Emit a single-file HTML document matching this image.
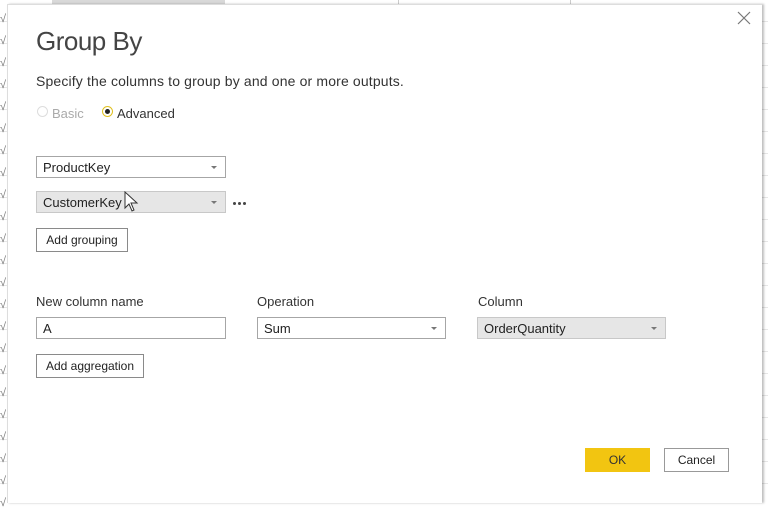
<!DOCTYPE html>
<html><head><style>
body{margin:0;width:768px;height:502px;overflow:hidden;background:#fff;font-family:"Liberation Sans",sans-serif;position:relative;color:#333}
.bg{position:absolute;left:0;top:0;width:768px;height:502px;background:
repeating-linear-gradient(to bottom,#fff 0 21px,#e6e6e6 21px 22px)}
.dlg{position:absolute;left:7px;top:4px;width:754px;height:498px;background:#fff;border-left:1px solid #ddd;border-top:1px solid #ddd;box-shadow:2px 0 2px rgba(0,0,0,.25)}
.a{position:absolute;white-space:nowrap}
.sel{position:absolute;height:22px;border:1px solid #a6a6a6;box-sizing:border-box;font-size:13px;line-height:21px;padding-left:6px;color:#222;background:#fff}
.sel.g{background:#e6e6e6;border-color:#c8c8c8}
.sel .ar{position:absolute;right:8px;top:9px;width:0;height:0;border-left:3px solid transparent;border-right:3px solid transparent;border-top:3px solid #777}
.btn{position:absolute;height:24px;border:1px solid #8a8a8a;box-sizing:border-box;font-size:12px;line-height:23px;text-align:center;color:#222;background:#fff}
</style></head><body>
<div class="bg"></div>
<div class="a" style="left:52px;top:0;width:173px;height:4px;background:#d9d9d9"></div>
<div class="a" style="left:398px;top:0;width:1px;height:4px;background:#ccc"></div>
<div class="a" style="left:570px;top:0;width:1px;height:4px;background:#ccc"></div>
<div class="a" style="left:0;top:8px;font-size:11px;color:#777;line-height:22px">√<br>√<br>√<br>√<br>√<br>√<br>√<br>√<br>√<br>√<br>√<br>√<br>√<br>√<br>√<br>√<br>√<br>√<br>√<br>√<br>√<br>√<br>√</div>
<div class="dlg"></div>
<svg class="a" style="left:737px;top:11px" width="14" height="14"><path d="M1 1L13 13M13 1L1 13" stroke="#777" stroke-width="1.2"/></svg>
<div class="a" style="left:36px;top:26px;font-size:26px;color:#444;letter-spacing:-0.5px">Group By</div>
<div class="a" style="left:36px;top:73px;font-size:14px;color:#333;letter-spacing:0.15px">Specify the columns to group by and one or more outputs.</div>
<div class="a" style="left:37px;top:106px;width:9px;height:9px;border:1px solid #ddd;border-radius:50%"></div>
<div class="a" style="left:52px;top:106px;font-size:13px;color:#aaa">Basic</div>
<div class="a" style="left:102px;top:106px;width:9px;height:9px;border:1px solid #e0c020;border-radius:50%;background:#fff"></div>
<div class="a" style="left:105px;top:109px;width:5px;height:5px;border-radius:50%;background:#222"></div>
<div class="a" style="left:117px;top:106px;font-size:13px;color:#333">Advanced</div>
<div class="sel" style="left:36px;top:156px;width:190px">ProductKey<span class="ar"></span></div>
<div class="sel g" style="left:36px;top:191px;width:190px">CustomerKey<span class="ar"></span></div>
<svg class="a" style="left:124px;top:191px" width="16" height="22"><path d="M1 1L1 17L5 13L8 20L10 19L7 12L13 12Z" fill="#fff" stroke="#333" stroke-width="1"/></svg>
<div class="a" style="left:233px;top:202px;width:3px;height:3px;background:#444;border-radius:50%"></div>
<div class="a" style="left:238px;top:202px;width:3px;height:3px;background:#444;border-radius:50%"></div>
<div class="a" style="left:243px;top:202px;width:3px;height:3px;background:#444;border-radius:50%"></div>
<div class="btn" style="left:36px;top:228px;width:92px">Add grouping</div>
<div class="a" style="left:36px;top:294px;font-size:13px">New column name</div>
<div class="a" style="left:257px;top:294px;font-size:13px">Operation</div>
<div class="a" style="left:478px;top:294px;font-size:13px">Column</div>
<div class="sel" style="left:36px;top:317px;width:190px">A</div>
<div class="sel" style="left:257px;top:317px;width:189px">Sum<span class="ar"></span></div>
<div class="sel g" style="left:477px;top:317px;width:189px">OrderQuantity<span class="ar"></span></div>
<div class="btn" style="left:36px;top:354px;width:108px">Add aggregation</div>
<div class="a" style="left:585px;top:448px;width:65px;height:24px;background:#f2c511;font-size:12px;line-height:25px;text-align:center;color:#333">OK</div>
<div class="btn" style="left:664px;top:448px;width:65px;border-color:#999">Cancel</div>
</body></html>
